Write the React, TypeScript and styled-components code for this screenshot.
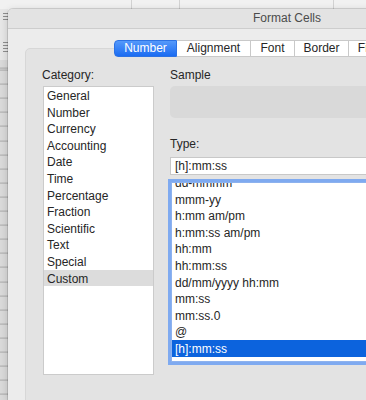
import React from "react";
import styled, { createGlobalStyle } from "styled-components";

const GlobalStyle = createGlobalStyle`
  html, body {
    margin: 0;
    padding: 0;
  }
  body {
    font-family: "Liberation Sans", Arial, sans-serif;
    font-size: 12px;
    color: #262626;
    background: #f2f2f2;
  }
  * {
    box-sizing: border-box;
  }
`;

const Screen = styled.div`
  width: 366px;
  height: 400px;
  overflow: hidden;
  display: grid;
  grid-template-columns: 8px 558px;
  grid-template-rows: 9px 391px;
  background: #f2f2f2;
`;

// spreadsheet column header strip peeking out above the dialog
const SheetHeader = styled.div`
  grid-column: 1 / -1;
  display: flex;
  background: #f1f1f1;
`;

const SheetCol = styled.div<{ $w: number }>`
  flex: 0 0 ${(p) => p.$w}px;
  height: 100%;
  border-right: 1px solid #d2d2d2;
`;

const Gutter = styled.div`
  display: flex;
  flex-direction: column;
  box-shadow: inset -2px 0 3px rgba(0, 0, 0, 0.08);
`;

const GutterHead = styled.div`
  height: 51px;
  background: #e7e7e7;
  padding: 4px 0 0 3px;
  display: flex;
  flex-direction: column;
  gap: 22px;
`;

const Grip = styled.span<{ $lines: number }>`
  display: block;
  width: 5px;
  height: ${(p) => p.$lines * 3 - 2}px;
  background: repeating-linear-gradient(
    to bottom,
    #8e8e8e 0 1px,
    transparent 1px 3px
  );
`;

const GutterRows = styled.div`
  flex: 1;
  background: repeating-linear-gradient(
    to bottom,
    #a9a9a9 0 1px,
    #dadada 1px 14.1px
  );
  background-position: 0 9.6px;
`;

const Dialog = styled.div`
  display: flex;
  flex-direction: column;
  background: #ececec;
  border-top-left-radius: 5px;
  box-shadow: 0 0 0 1px rgba(0, 0, 0, 0.12), 0 2px 8px rgba(0, 0, 0, 0.18);
`;

const TitleBar = styled.div`
  height: 20px;
  line-height: 19px;
  text-align: center;
  color: #4b4b4b;
  font-size: 12px;
  background: #e3e3e3;
  border-bottom: 1px solid #cdcdcd;
  border-top-left-radius: 5px;
`;

const Body = styled.div`
  padding: 11px 17px 0;
  display: flex;
  flex-direction: column;
`;

const TabRow = styled.div`
  display: flex;
  justify-content: center;
  margin-bottom: -9px;
  position: relative;
  z-index: 1;
`;

const Tab = styled.div<{ $w: number; $active?: boolean }>`
  width: ${(p) => p.$w}px;
  height: 17px;
  line-height: 15px;
  text-align: center;
  font-size: 12px;
  background: ${(p) =>
    p.$active ? "linear-gradient(#5599fa, #1b6cf2)" : "#ffffff"};
  color: ${(p) => (p.$active ? "#ffffff" : "#262626")};
  border: 1px solid ${(p) => (p.$active ? "#2c72e4" : "#c9c9c9")};
  border-left-width: 0;

  &:first-child {
    border-left-width: 1px;
    border-radius: 4px 0 0 4px;
  }
  &:last-child {
    border-radius: 0 4px 4px 0;
  }
`;

const Panel = styled.div`
  height: 420px;
  background: #e3e3e3;
  border: 1px solid #d7d7d7;
  border-radius: 5px;
  padding: 18px 17px 0 16px;
  display: grid;
  grid-template-columns: 112px 1fr;
  column-gap: 16px;
  align-items: start;
`;

const Column = styled.div`
  display: flex;
  flex-direction: column;
`;

const Label = styled.div<{ $gap?: number }>`
  height: 14px;
  padding-top: 2px;
  line-height: 12px;
  color: #262626;
  margin-top: ${(p) => p.$gap ?? 0}px;
`;

const CategoryList = styled.div`
  margin: 5px 0 0 1px;
  width: 111px;
  height: 289px;
  background: #ffffff;
  border: 1px solid #cbcbcb;
  overflow: hidden;
`;

const Row = styled.div<{ $state?: "focus" | "dim" }>`
  height: 16.62px;
  padding: 2px 0 0 3px;
  line-height: 14.62px;
  white-space: nowrap;
  background: ${(p) =>
    p.$state === "focus" ? "#0c63dd" : p.$state === "dim" ? "#dcdcdc" : "transparent"};
  color: ${(p) => (p.$state === "focus" ? "#ffffff" : "#262626")};
`;

const SampleBox = styled.div`
  margin-top: 5px;
  height: 32px;
  background: #d9d9d9;
  border-radius: 5px;
`;

const TypeInput = styled.div`
  margin-top: 7px;
  height: 18px;
  padding: 1px 0 0 4px;
  line-height: 15px;
  background: #ffffff;
  border: 1px solid #c8c8c8;
`;

const TypeList = styled.div`
  margin: 7px 0 0 1px;
  height: 180px;
  background: #ffffff;
  border: 1px solid #8db2ee;
  box-shadow: 0 0 0 3px #7faaf0;
  overflow: hidden;
`;

const Scroller = styled.div`
  margin-top: -9px;
`;

const categories = [
  "General",
  "Number",
  "Currency",
  "Accounting",
  "Date",
  "Time",
  "Percentage",
  "Fraction",
  "Scientific",
  "Text",
  "Special",
  "Custom",
];

const formats = [
  "dd-mmmm",
  "mmm-yy",
  "h:mm am/pm",
  "h:mm:ss am/pm",
  "hh:mm",
  "hh:mm:ss",
  "dd/mm/yyyy hh:mm",
  "mm:ss",
  "mm:ss.0",
  "@",
  "[h]:mm:ss",
  "[$-409]dddd, mmmm d, yyyy [$-409]h:mm:ss",
];

const tabs = [
  { name: "Number", w: 63 },
  { name: "Alignment", w: 74 },
  { name: "Font", w: 44 },
  { name: "Border", w: 54 },
  { name: "Fill", w: 34 },
  { name: "Protection", w: 77 },
];

const App: React.FC = () => {
  return (
    <>
      <GlobalStyle />
      <Screen>
        <SheetHeader>
          <SheetCol $w={132} />
          <SheetCol $w={48} />
          <SheetCol $w={154} />
        </SheetHeader>

        <Gutter>
          <GutterHead>
            <Grip $lines={3} />
            <Grip $lines={4} />
          </GutterHead>
          <GutterRows />
        </Gutter>

        <Dialog>
          <TitleBar>Format Cells</TitleBar>
          <Body>
            <TabRow>
              {tabs.map((t, i) => (
                <Tab key={t.name} $w={t.w} $active={i === 0}>
                  {t.name}
                </Tab>
              ))}
            </TabRow>

            <Panel>
              <Column>
                <Label>Category:</Label>
                <CategoryList>
                  {categories.map((c) => (
                    <Row key={c} $state={c === "Custom" ? "dim" : undefined}>
                      {c}
                    </Row>
                  ))}
                </CategoryList>
              </Column>

              <Column>
                <Label>Sample</Label>
                <SampleBox />
                <Label $gap={18}>Type:</Label>
                <TypeInput>[h]:mm:ss</TypeInput>
                <TypeList>
                  <Scroller>
                    {formats.map((f, i) => (
                      <Row key={f} $state={i === 10 ? "focus" : undefined}>
                        {f}
                      </Row>
                    ))}
                  </Scroller>
                </TypeList>
              </Column>
            </Panel>
          </Body>
        </Dialog>
      </Screen>
    </>
  );
};

export default App;
